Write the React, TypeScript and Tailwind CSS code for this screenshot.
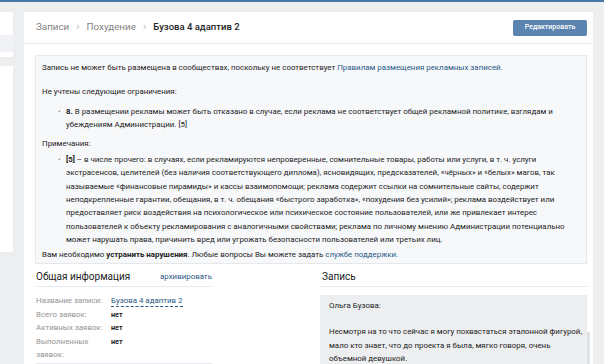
import React from 'react';

const noteLines = [
  'в числе прочего: в случаях, если рекламируются непроверенные, сомнительные товары, работы или услуги, в т. ч. услуги',
  'экстрасенсов, целителей (без наличия соответствующего диплома), ясновидящих, предсказателей, «чёрных» и «белых» магов, так',
  'называемые «финансовые пирамиды» и кассы взаимопомощи; реклама содержит ссылки на сомнительные сайты, содержит',
  'неподкрепленные гарантии, обещания, в т. ч. обещания «быстрого заработка», «похудения без усилий»; реклама воздействует или',
  'предоставляет риск воздействия на психологическое или психическое состояние пользователей, или же привлекает интерес',
  'пользователей к объекту рекламирования с аналогичными свойствами; реклама по личному мнению Администрации потенциально',
  'может нарушать права, причинить вред или угрожать безопасности пользователей или третьих лиц.',
];

function Bullet({ children }: { children: React.ReactNode }) {
  return (
    <div className="flex">
      <span className="w-[24px] shrink-0 pl-[16px] text-[#828282]">•</span>
      <div className="whitespace-nowrap">{children}</div>
    </div>
  );
}

function InfoRow({ label, children }: { label: string; children: React.ReactNode }) {
  return (
    <div className="flex">
      <div className="w-[75px] shrink-0 text-[#939393]">{label}</div>
      <div>{children}</div>
    </div>
  );
}

export default function App() {
  return (
    <div className="w-[604px] h-[364px] overflow-hidden bg-[#edeef0] [font-family:Roboto,sans-serif] text-[#222]">
      {/* top bar */}
      <div className="h-[2px] bg-[#4a76a8]" />

      <div className="flex gap-[11px] pt-[10px]">
        {/* sidebar */}
        <div className="w-[13px] shrink-0 flex flex-col gap-[9px]">
          <div className="h-[45px] bg-white flex flex-col">
            <div className="h-[23px]" />
            <div className="h-[17px] bg-[#f0f2f5]" />
          </div>
          <div className="h-[186px] bg-white" />
        </div>

        {/* main card */}
        <div className="w-[569px] shrink-0 bg-white">
          <div className="h-[32px] flex items-center justify-between pl-[12px] pr-[6px] border-b border-[#e7e8ec]">
            <div className="flex items-center gap-[7px] text-[9.8px]">
              <span className="text-[#828282]">Записи</span>
              <span className="text-[#b8bcc2] text-[11px]">›</span>
              <span className="text-[#828282]">Похудение</span>
              <span className="text-[#b8bcc2] text-[11px]">›</span>
              <span className="font-medium text-[#222] text-[9.5px]">Бузова 4 адаптив 2</span>
            </div>
            <button className="h-[16px] w-[74px] rounded-[2px] bg-[#5b84b1] text-white text-[7px] font-medium">
              Редактировать
            </button>
          </div>

          <div className="pt-[11px] pl-[11px] pr-[6px]">
            {/* warning box */}
            <div className="h-[209px] border border-[#e7e8ec] bg-[#f7f8fa] pl-[6px] pt-[5px] text-[7.9px] leading-[13.4px]">
              <div className="whitespace-nowrap">
                Запись не может быть размещена в сообществах, поскольку не соответствует{' '}
                <span className="text-[#2a5885]">Правилам размещения рекламных записей.</span>
              </div>
              <div className="mt-[10.6px]">Не учтены следующие ограничения:</div>
              <div className="mt-[6.6px]">
                <Bullet>
                  <div>
                    <b>8.</b> В размещении рекламы может быть отказано в случае, если реклама не соответствует общей рекламной политике, взглядам и
                  </div>
                  <div>убеждениям Администрации. [5]</div>
                </Bullet>
              </div>
              <div className="mt-[5.4px]">Примечания:</div>
              <div className="mt-[2.2px]">
                <Bullet>
                  {noteLines.map((line, i) => (
                    <div key={i}>
                      {i === 0 && <b>[5]</b>}
                      {i === 0 ? ' – ' : ''}
                      {line}
                    </div>
                  ))}
                </Bullet>
              </div>
              <div className="mt-[1.4px] whitespace-nowrap">
                Вам необходимо <b>устранить нарушения</b>. Любые вопросы Вы можете задать{' '}
                <span className="text-[#2a5885]">службе поддержки.</span>
              </div>
            </div>

            {/* bottom columns */}
            <div className="flex pt-[6px]">
              <div className="w-[177px] shrink-0 pl-[1px]">
                <div className="h-[17px] flex items-end border-b border-[#e7e8ec] pb-[3px] whitespace-nowrap">
                  <span className="w-[124px] text-[10px] leading-[13px]">Общая информация</span>
                  <span className="text-[7.9px] text-[#2a5885]">архивировать</span>
                </div>
                <div className="pt-[7px] text-[7.9px] leading-[13.6px]">
                  <InfoRow label="Название записи:">
                    <span className="text-[#2a5885] border-b border-dashed border-[#2a5885] leading-[11px] inline-block">
                      Бузова 4 адаптив 2
                    </span>
                  </InfoRow>
                  <InfoRow label="Всего заявок:">
                    <b className="text-[7.2px]">нет</b>
                  </InfoRow>
                  <InfoRow label="Активных заявок:">
                    <b className="text-[7.2px]">нет</b>
                  </InfoRow>
                  <InfoRow label="Выполненных заявок:">
                    <b className="text-[7.2px]">нет</b>
                  </InfoRow>
                  <div className="mt-[1px] h-px bg-[#e7e8ec]" />
                </div>
              </div>

              <div className="ml-[108px] flex-1">
                <div className="h-[17px] flex items-end border-b border-[#e7e8ec] pb-[3px] pl-[2px]">
                  <span className="text-[10px] leading-[13px]">Запись</span>
                </div>
                <div className="relative mt-[8px] h-[80px] bg-[#edeef0] pl-[9px] pt-[4px] text-[7.9px] leading-[13.6px] whitespace-nowrap">
                  <div>Ольга Бузова:</div>
                  <div className="mt-[12.6px]">
                    Несмотря на то что сейчас я могу похвастаться эталонной фигурой,
                    <br />
                    мало кто знает, что до проекта я была, мягко говоря, очень
                    <br />
                    объемной девушкой.
                  </div>
                  <div className="absolute right-[-3px] top-[37px] w-[3px] h-[40px] bg-[#dfe2e7]" />
                </div>
              </div>
            </div>
          </div>
        </div>
      </div>
    </div>
  );
}
